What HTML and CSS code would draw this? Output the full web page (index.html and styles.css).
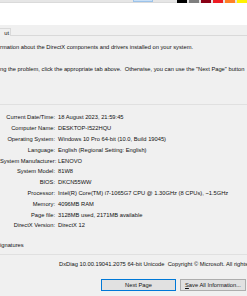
FILE: index.html
```html
<!DOCTYPE html>
<html lang="en">
<head>
    <meta charset="UTF-8">
    <title>DirectX Diagnostic Tool</title>
    <link rel="stylesheet" href="styles.css">
</head>
<body>
    <div class="toolbar">
        <div class="tool-selected"></div>
        <div class="swatches">
            <span class="swatch" style="background:#000000"></span>
            <span class="swatch" style="background:#7f7f7f"></span>
            <span class="swatch" style="background:#880015"></span>
            <span class="swatch" style="background:#ed1c24"></span>
            <span class="swatch" style="background:#ff7f27"></span>
            <span class="swatch" style="background:#fff200"></span>
        </div>
    </div>
    <div class="canvas"></div>

    <div class="dialog">
        <div class="tabs">
            <div class="tab">ut</div>
        </div>

        <div class="intro">
            <p>rmation about the DirectX components and drivers installed on your system.</p>
            <p>ng the problem, click the appropriate tab above.&nbsp; Otherwise, you can use the "Next Page" button</p>
        </div>

        <div class="info">
            <span class="label">Current Date/Time:</span><span>18 August 2023, 21:59:45</span>
            <span class="label">Computer Name:</span><span>DESKTOP-I522HQU</span>
            <span class="label">Operating System:</span><span>Windows 10 Pro 64-bit (10.0, Build 19045)</span>
            <span class="label">Language:</span><span>English (Regional Setting: English)</span>
            <span class="label">System Manufacturer:</span><span>LENOVO</span>
            <span class="label">System Model:</span><span>81W8</span>
            <span class="label">BIOS:</span><span>DKCN55WW</span>
            <span class="label">Processor:</span><span>Intel(R) Core(TM) i7-1065G7 CPU @ 1.30GHz (8 CPUs), ~1.5GHz</span>
            <span class="label">Memory:</span><span>4096MB RAM</span>
            <span class="label">Page file:</span><span>3128MB used, 2171MB available</span>
            <span class="label">DirectX Version:</span><span>DirectX 12</span>
        </div>

        <div class="signatures">ignatures</div>

        <div class="version">DxDiag 10.00.19041.2075 64-bit Unicode&nbsp; Copyright © Microsoft. All rights reserved.</div>

        <div class="buttons">
            <button class="btn btn-default">Next Page</button>
            <button class="btn"><u>S</u>ave All Information...</button>
        </div>
    </div>
</body>
</html>
```

FILE: styles.css
```css
* {
    margin: 0;
    padding: 0;
    box-sizing: border-box;
}
body {
    width: 247px;
    height: 296px;
    overflow: hidden;
    background: #f0f0f0;
    font-family: "Liberation Sans", Arial, sans-serif;
    font-size: 5.75px;
    color: #111;
}
.toolbar {
    height: 3px;
    background: #e6e6e6;
    display: flex;
    border-bottom: 1px solid #dadada;
}
.tool-selected {
    width: 22px;
    margin-left: 133px;
    background: #c9e0f7;
    border: 1px solid #9cc3ea;
    border-top: none;
}
.swatches {
    display: flex;
    gap: 2px;
    margin-left: 24px;
}
.swatch {
    width: 10px;
    height: 3px;
}
.canvas {
    height: 22px;
    background: #ffffff;
}
.dialog {
    display: flex;
    flex-direction: column;
}
.tabs {
    height: 11px;
    display: flex;
    border-bottom: 1px solid #d9d9d9;
}
.tab {
    width: 11px;
    margin-top: 3px;
    height: 8px;
    line-height: 8px;
    background: #f0f0f0;
    border-top: 1px solid #d9d9d9;
    border-right: 1px solid #d9d9d9;
    text-align: right;
    padding-right: 1px;
}
.intro {
    padding-top: 8px;
}
.intro p {
    line-height: 7px;
    white-space: nowrap;
}
.intro p + p {
    margin-top: 15px;
}
.info {
    border-top: 1px solid #e0e0e0;
    padding-top: 7px;
    margin-top: 31px;
    display: grid;
    grid-template-columns: 55px auto;
    column-gap: 3px;
    grid-auto-rows: 10.8px;
    align-items: center;
    white-space: nowrap;
}
.label {
    text-align: right;
}
.signatures {
    margin-top: 11px;
    line-height: 7px;
    padding-bottom: 5px;
    border-bottom: 1px solid #e0e0e0;
}
.version {
    margin-top: 6px;
    padding-left: 59px;
    line-height: 7px;
    white-space: nowrap;
    overflow: hidden;
}
.buttons {
    display: flex;
    gap: 4px;
    margin-top: 11px;
    padding-left: 101px;
}
.btn {
    flex: none;
    height: 12px;
    background: #e1e1e1;
    border: 1px solid #adadad;
    font-family: inherit;
    font-size: 5.75px;
    color: #111;
    white-space: nowrap;
}
.btn-default {
    width: 75px;
    border-color: #0078d7;
}
.btn + .btn {
    width: 66px;
}
```
